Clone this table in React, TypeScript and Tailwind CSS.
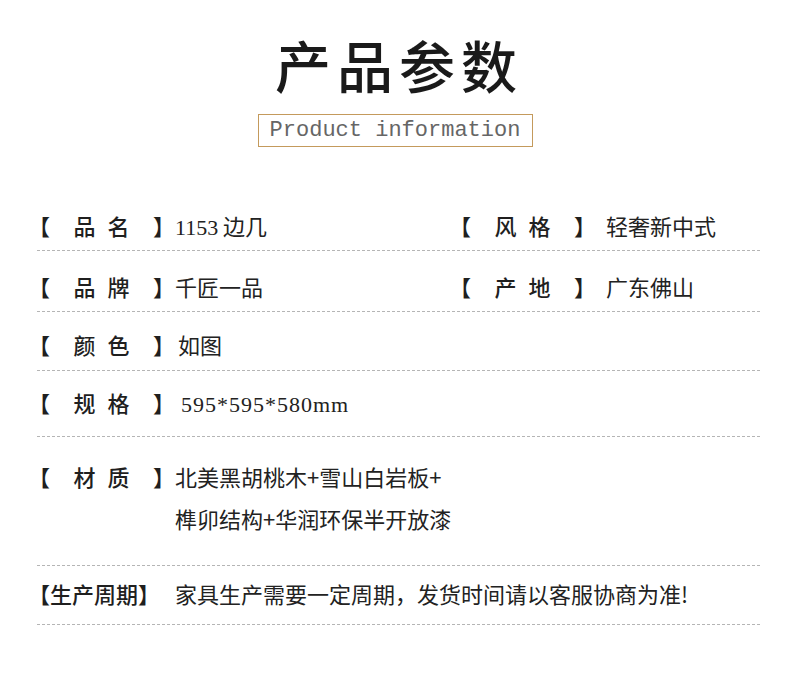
const cjk = { fontFamily: '"Noto Sans CJK SC", "Noto Sans", sans-serif' };
const serif = { fontFamily: '"Liberation Serif", "Noto Sans CJK SC", serif' };

function Label({ text }: { text: string }) {
  return (
    <div className="flex w-[147px] shrink-0 items-center font-medium text-[#1f1f1f]">
      <span className="w-[22px]">【</span>
      <span className="flex flex-1 justify-center gap-[12px]">
        {text.split("").map((c, i) => (
          <span key={i}>{c}</span>
        ))}
      </span>
      <span className="w-[22px]">】</span>
    </div>
  );
}

function Item({ label, value }: { label: string; value: React.ReactNode }) {
  return (
    <div className="flex items-start">
      <Label text={label} />
      <div className="text-[#222]">{value}</div>
    </div>
  );
}

// dashed divider rows; content nudged left so the brackets sit like the original
const row = "border-b border-dashed border-[#b5b5b5] [&>*]:-ml-[9px]";

export default function App() {
  return (
    <div className="w-[790px] h-[686px] bg-white text-[22px] leading-[30px]" style={cjk}>
      <div className="flex flex-col items-center pt-[30px]">
        <h1 className="pl-[8px] text-[56px] leading-[68px] font-medium tracking-[6px] text-[#1a1a1a]">产品参数</h1>
        <div
          className="mt-[16px] h-[33px] w-[275px] border border-[#c49a5c] flex items-center justify-center text-[22px] text-[#666]"
          style={{ fontFamily: '"Liberation Mono", monospace' }}
        >
          Product information
        </div>
      </div>

      <div className="ml-[37px] mr-[30px] mt-[63px]">
        <div className={`pb-[10px] ${row}`}>
          <div className="grid grid-cols-[421px_1fr]">
            <Item label="品名" value={<><span className="leading-none" style={serif}>1153</span> 边几</>} />
            <Item label="风格" value={<span className="pl-[10px]">轻奢新中式</span>} />
          </div>
        </div>
        <div className={`pt-[20px] pb-[10px] ${row}`}>
          <div className="grid grid-cols-[421px_1fr]">
            <Item label="品牌" value="千匠一品" />
            <Item label="产地" value={<span className="pl-[10px]">广东佛山</span>} />
          </div>
        </div>
        <div className={`pt-[17px] pb-[11px] ${row}`}>
          <Item label="颜色" value={<span className="pl-[3px]">如图</span>} />
        </div>
        <div className={`pt-[16px] pb-[19px] ${row}`}>
          <Item
            label="规格"
            value={<span className="pl-[6px] tracking-[1px] leading-none" style={serif}>595*595*580mm</span>}
          />
        </div>
        <div className={`pt-[18px] pb-[26px] leading-[42px] ${row}`}>
          <Item
            label="材质"
            value={
              <>
                <div>北美黑胡桃木+雪山白岩板+</div>
                <div>榫卯结构+华润环保半开放漆</div>
              </>
            }
          />
        </div>
        <div className={`pt-[12px] pb-[16px] ${row}`}>
          <div className="flex">
            <div className="w-[147px] shrink-0 font-medium text-[#1f1f1f]">【生产周期】</div>
            <div className="text-[#222]">家具生产需要一定周期，发货时间请以客服协商为准!</div>
          </div>
        </div>
      </div>
    </div>
  );
}
